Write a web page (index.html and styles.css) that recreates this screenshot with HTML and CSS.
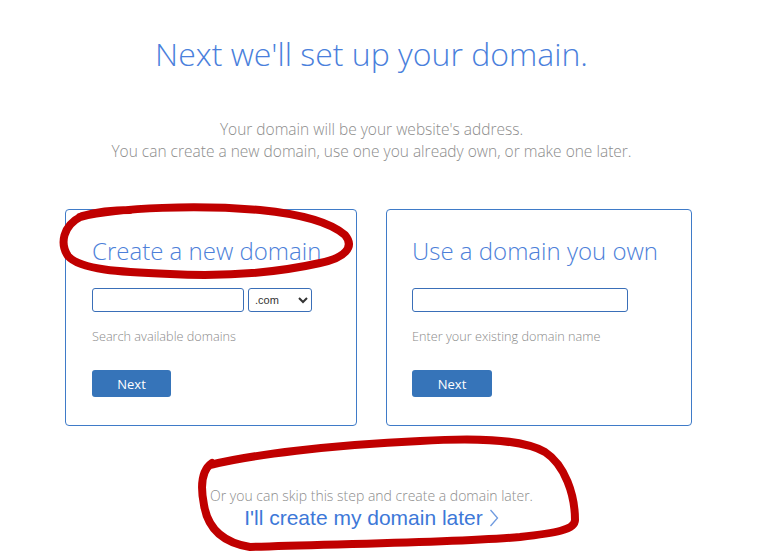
FILE: index.html
```html
<!DOCTYPE html>
<html lang="en">
    <head>
        <meta charset="UTF-8">
        <meta name="viewport" content="width=device-width, initial-scale=1.0">
        <title>Set up your domain</title>
        <link rel="stylesheet" href="styles.css">
    </head>
<body>
    <div class="page">
        <h1 class="title">Next we'll set up your domain.</h1>
        <p class="intro">
            Your domain will be your website's address.<br>
            You can create a new domain, use one you already own, or make one later.
        </p>

        <div class="choices">
            <div class="card card-new">
                <h2>Create a new domain</h2>
                <div class="field-row">
                    <input type="text" class="domain-input short">
                    <select class="tld-select">
                        <option>.com</option>
                        <option>.net</option>
                        <option>.org</option>
                    </select>
                </div>
                <p class="hint">Search available domains</p>
                <button type="button" class="next-button">Next</button>
            </div>

            <div class="card card-own">
                <h2>Use a domain you own</h2>
                <div class="field-row">
                    <input type="text" class="domain-input wide">
                </div>
                <p class="hint">Enter your existing domain name</p>
                <button type="button" class="next-button">Next</button>
            </div>
        </div>

        <div class="skip">
            <p class="skip-text">Or you can skip this step and create a domain later.</p>
            <a href="#" class="skip-link">
                <span>I'll create my domain later</span>
                <svg width="10" height="18" viewBox="0 0 10 18" fill="none" stroke="currentColor" stroke-width="1.3">
                    <polyline points="1.5 1 8.5 9 1.5 17"></polyline>
                </svg>
            </a>
        </div>
    </div>

    <!-- hand-drawn markup over the screenshot -->
    <svg class="annotations" width="783" height="551" viewBox="0 0 783 551" fill="none" stroke="#c00000" stroke-width="8" stroke-linecap="round" stroke-linejoin="round">
        <path d="M 80 217 C 120 207, 200 205, 260 210 C 300 214, 330 222, 345 235 C 355 247, 345 258, 320 263 C 280 272, 230 277, 170 274 C 120 272, 80 270, 68 256 C 60 244, 62 226, 82 216 C 100 211, 120 210, 130 210"></path>
        <path d="M 210 465 C 250 455, 330 445, 420 441 C 470 438, 520 438, 545 452 C 565 465, 575 495, 575 520 C 575 530, 555 533, 520 537 C 450 543, 330 544, 250 547 C 225 543, 208 530, 204 505 C 200 485, 202 470, 212 463"></path>
    </svg>
</body>
</html>
```

FILE: styles.css
```css
* {
    margin: 0;
    padding: 0;
    box-sizing: border-box;
}

html {
    overflow: hidden;
}

body {
    font-family: 'Open Sans', 'Liberation Sans', sans-serif;
    background-color: white;
    color: #888888;
    position: relative;
    min-height: 551px;
}

.page {
    width: 743px;
    padding-top: 34px;
}

.title {
    text-align: center;
    font-size: 32px;
    line-height: 40px;
    font-weight: 300;
    color: #4a7fdc;
}

.intro {
    margin-top: 44px;
    text-align: center;
    font-size: 15.5px;
    line-height: 22px;
    font-weight: 300;
    color: #8c8c8c;
}

.choices {
    display: flex;
    gap: 29px;
    margin-top: 47px;
    padding-left: 65px;
}

.card {
    border: 1px solid #3f7bc8;
    border-radius: 4px;
    padding: 26px 26px 28px;
}

.card-new {
    width: 292px;
}

.card-own {
    width: 306px;
    padding-left: 25px;
}

.card h2 {
    font-size: 24px;
    line-height: 30px;
    font-weight: 300;
    color: #4d7fd9;
    white-space: nowrap;
}

.field-row {
    display: flex;
    gap: 4px;
    margin-top: 22px;
}

.domain-input {
    height: 24px;
    border: 1px solid #3a6fb8;
    border-radius: 3px;
    padding: 0 6px;
    font-size: 13px;
    outline: none;
}

.domain-input.short {
    width: 152px;
}

.domain-input.wide {
    width: 216px;
}

.tld-select {
    width: 64px;
    height: 24px;
    border: 1px solid #3a6fb8;
    border-radius: 3px;
    background-color: white;
    font-family: 'Liberation Sans', Arial, sans-serif;
    font-size: 11px;
    color: #333;
    padding-left: 2px;
}

.hint {
    margin-top: 15px;
    font-size: 12.7px;
    line-height: 18px;
    font-weight: 300;
    color: #8a8a8a;
}

.next-button {
    margin-top: 25px;
    width: 79px;
    height: 27px;
    border: none;
    border-radius: 3px;
    background-color: #3674b9;
    color: white;
    font-family: 'Open Sans', sans-serif;
    font-size: 13px;
    cursor: pointer;
}

.card-own .next-button {
    width: 80px;
}

.skip {
    margin-top: 60px;
    text-align: center;
}

.skip-text {
    font-size: 14px;
    line-height: 20px;
    font-weight: 300;
    color: #8c8c8c;
}

.skip-link {
    display: inline-flex;
    align-items: center;
    gap: 6px;
    font-family: 'Liberation Sans', Arial, sans-serif;
    font-size: 21px;
    line-height: 24px;
    color: #3d78d8;
    text-decoration: none;
}

.skip-link svg {
    color: #6f9be0;
}

.annotations {
    position: absolute;
    top: 0;
    left: 0;
    pointer-events: none;
}
```
